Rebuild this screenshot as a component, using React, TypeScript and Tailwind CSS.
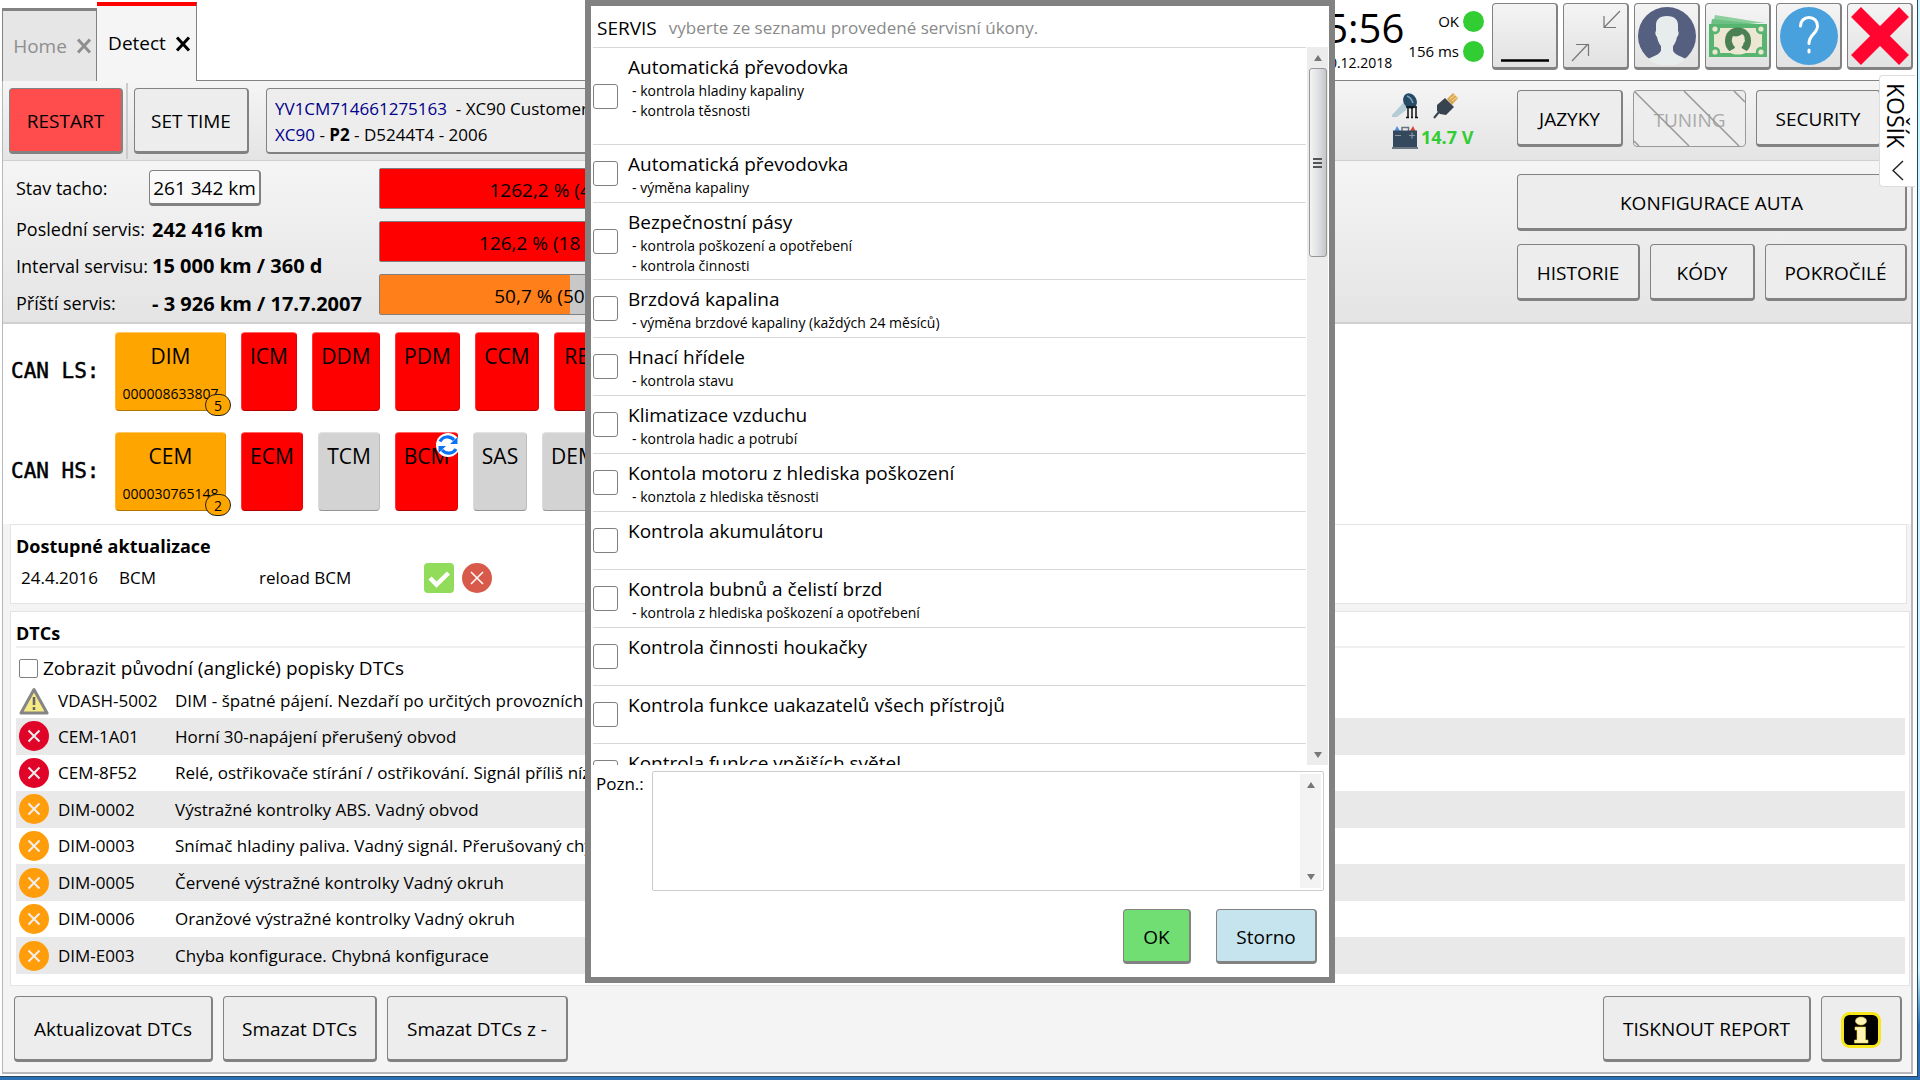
import React, { useState } from 'react'
import clsx from 'clsx'

type Module = { name: string; color: string; width: string; serial?: string; count?: number; reload?: boolean }

const canLs: Module[] = [
  { name: 'DIM', color: 'bg-[#ffa500]', width: 'w-[111px]', serial: '000008633807', count: 5 },
  { name: 'ICM', color: 'bg-[#ff0000]', width: 'w-[56px]' },
  { name: 'DDM', color: 'bg-[#ff0000]', width: 'w-[68px]' },
  { name: 'PDM', color: 'bg-[#ff0000]', width: 'w-[65px]' },
  { name: 'CCM', color: 'bg-[#ff0000]', width: 'w-[64px]' },
  { name: 'REM', color: 'bg-[#ff0000]', width: 'w-[64px]' },
]

const canHs: Module[] = [
  { name: 'CEM', color: 'bg-[#ffa500]', width: 'w-[111px]', serial: '000030765148', count: 2 },
  { name: 'ECM', color: 'bg-[#ff0000]', width: 'w-[62px]' },
  { name: 'TCM', color: 'bg-[#d3d3d3]', width: 'w-[62px]' },
  { name: 'BCM', color: 'bg-[#ff0000]', width: 'w-[63px]', reload: true },
  { name: 'SAS', color: 'bg-[#d3d3d3]', width: 'w-[54px]' },
  { name: 'DEM', color: 'bg-[#d3d3d3]', width: 'w-[64px]' },
]

const dtcs = [
  { level: 'warning', code: 'VDASH-5002', text: 'DIM - špatné pájení. Nezdaří po určitých provozních' },
  { level: 'error', code: 'CEM-1A01', text: 'Horní 30-napájení přerušený obvod' },
  { level: 'error', code: 'CEM-8F52', text: 'Relé, ostřikovače stírání / ostřikování. Signál příliš nízký' },
  { level: 'minor', code: 'DIM-0002', text: 'Výstražné kontrolky ABS. Vadný obvod' },
  { level: 'minor', code: 'DIM-0003', text: 'Snímač hladiny paliva. Vadný signál. Přerušovaný chybný' },
  { level: 'minor', code: 'DIM-0005', text: 'Červené výstražné kontrolky Vadný okruh' },
  { level: 'minor', code: 'DIM-0006', text: 'Oranžové výstražné kontrolky Vadný okruh' },
  { level: 'minor', code: 'DIM-E003', text: 'Chyba konfigurace. Chybná konfigurace' },
]

const services = [
  { title: 'Automatická převodovka', notes: ['- kontrola hladiny kapaliny', '- kontrola těsnosti', ''] },
  { title: 'Automatická převodovka', notes: ['- výměna kapaliny'] },
  { title: 'Bezpečnostní pásy', notes: ['- kontrola poškození a opotřebení', '- kontrola činnosti'] },
  { title: 'Brzdová kapalina', notes: ['- výměna brzdové kapaliny (každých 24 měsíců)'] },
  { title: 'Hnací hřídele', notes: ['- kontrola stavu'] },
  { title: 'Klimatizace vzduchu', notes: ['- kontrola hadic a potrubí'] },
  { title: 'Kontola motoru z hlediska poškození', notes: ['- konztola z hlediska těsnosti'] },
  { title: 'Kontrola akumulátoru', notes: [] },
  { title: 'Kontrola bubnů a čelistí brzd', notes: ['- kontrola z hlediska poškození a opotřebení'] },
  { title: 'Kontrola činnosti houkačky', notes: [] },
  { title: 'Kontrola funkce uakazatelů všech přístrojů', notes: [] },
  { title: 'Kontrola funkce vnějších světel', notes: [] },
]

const bars = [
  { label: '1262,2 % (4544 d)', value: 100, color: 'bg-[#ff0000]' },
  { label: '126,2 % (18 926 km)', value: 100, color: 'bg-[#ff0000]' },
  { label: '50,7 % (507 hod)', value: 50.7, color: 'bg-[#ff7f1a]' },
]

const btnBase =
  'flex items-center justify-center rounded-[4px] border border-r-2 border-b-3 border-[#828282] whitespace-nowrap'

const Btn: React.FC<React.ButtonHTMLAttributes<HTMLButtonElement>> = ({ className, ...props }) => (
  <button type="button" className={clsx(btnBase, 'pt-[3px]', className)} {...props} />
)

const WindowBtn: React.FC<{ label: string; children: React.ReactNode }> = ({ label, children }) => (
  <button
    type="button"
    aria-label={label}
    className={clsx(btnBase, 'h-[67px] w-[66px] bg-linear-to-b from-[#f4f4f4] to-[#e2e2e2]')}
  >
    {children}
  </button>
)

const CloseMark: React.FC = () => (
  <svg width="16" height="16" viewBox="0 0 16 16" fill="none" stroke="currentColor" strokeWidth="3">
    <path d="M2 1.5 14 14.5M14 1.5 2 14.5" />
  </svg>
)

const UserIcon: React.FC = () => (
  <svg width="58" height="58" viewBox="0 0 58 58">
    <circle cx="29" cy="29" r="29" fill="#556080" />
    <path
      d="M29 9c-8 0-11 4-11 9v6c-1 1-1 4 1 6 1 5 3 8 4 9v4c0 3-4 5-13 9a29 29 0 0 0 38 0c-9-4-13-6-13-9v-4c1-1 3-4 4-9 2-2 2-5 1-6v-6c0-5-3-9-11-9Z"
      fill="#e7eced"
    />
  </svg>
)

const MoneyIcon: React.FC = () => (
  <svg width="58" height="42" viewBox="0 0 58 42">
    <path d="M6 0 56 8H4Z" fill="#8ccf9c" />
    <path d="M3 4 58 10H2Z" fill="#6cc083" />
    <rect y="9" width="58" height="33" fill="#57b56f" />
    <path d="M11 13h36a5 5 0 0 0 6 6v13a5 5 0 0 0-6 6H11a5 5 0 0 0-6-6V19a5 5 0 0 0 6-6Z" fill="#ece7d2" />
    <circle cx="6" cy="14" r="2.6" fill="#ece7d2" />
    <circle cx="52" cy="14" r="2.6" fill="#ece7d2" />
    <circle cx="6" cy="37" r="2.6" fill="#ece7d2" />
    <circle cx="52" cy="37" r="2.6" fill="#ece7d2" />
    <path d="M29 12.5c-8 0-13 6-13 13 0 6 2.5 10 7 12h12c4.5-2 7-6 7-12 0-7-5-13-13-13Z" fill="#4a8054" />
    <path d="M24 21c3 1 7 0 9-2 2 1 3 3 2.500 5 1 2 0 3-1 4 0 2-1 3-2 4 1 3 4 2 6 5-3 2-6 2.500-9.500 2.500S22.500 39 20 37c2-3 5-2 6-5-1-1-2-2-2.500-4-1-1-1-4 .5-7Z" fill="#ece7d2" />
  </svg>
)

const HelpIcon: React.FC = () => (
  <svg width="58" height="58" viewBox="0 0 58 58" fill="none" stroke="#fff" strokeWidth="3" strokeLinecap="round">
    <circle cx="29" cy="29" r="29" fill="#48a0dc" stroke="none" />
    <path d="M20.500 19c0-5 3.500-8.500 8.500-8.500s8.500 3.500 8.500 8.500c0 8-8.500 8-8.500 17.500M29 43v2" />
  </svg>
)

const KeyIcon: React.FC = () => (
  <svg width="26" height="26" viewBox="0 0 26 26">
    <path d="M12 9 18 14 5 24H0v-2Z" fill="#b4ccd6" />
    <ellipse cx="18" cy="8" rx="6.500" ry="8" transform="rotate(-30 18 8)" fill="#254b66" />
    <path d="M15 3c3 1 5 4 6 7" fill="none" stroke="#7fa3b8" strokeWidth="1.500" />
    <path d="M14 14h11M16 14v10M20 14v10M24 14v10M14 24.500h3M19 24.500h2M23 24.500h3" stroke="#111" strokeWidth="1.500" />
  </svg>
)

const PlugIcon: React.FC = () => (
  <svg width="26" height="26" viewBox="0 0 26 26">
    <path d="m14 6 6-6 5 5-6 7Z" fill="#dba753" />
    <path d="m17 6 5-4M19 8l5-4" stroke="#fae0a0" />
    <path d="m12 5 9 9-8 8-6-1-3-3v-6Z" fill="#37444f" />
    <path d="m6 19-5 6" stroke="#37444f" strokeWidth="2" />
  </svg>
)

const BatteryIcon: React.FC = () => (
  <svg width="26" height="23" viewBox="0 0 26 23">
    <path d="M2.500 5 5 0l3 5Z" fill="#4a8fe8" />
    <path d="M18 5 21 0l2.500 5Z" fill="#d8452e" />
    <path d="M10 5V1.500h6.500V5" fill="none" stroke="#667480" strokeWidth="1.500" />
    <rect x="1" y="4.500" width="24" height="17" fill="#34495e" />
    <path d="M0 22h26" stroke="#6b7884" strokeWidth="2" />
    <path d="M3 9.500h6M17 9.500h6M20 6.500v6" stroke="#8996a3" strokeWidth="1.200" />
  </svg>
)

const ReloadIcon: React.FC = () => (
  <svg width="24" height="26" viewBox="0 0 24 26" className="absolute -top-px -right-[3px]">
    <circle cx="12" cy="13" r="12" fill="#fff" />
    <path d="M4 9.500C7 4 14 3.500 18 8M20 17c-3 5-10 5.500-14 1" fill="none" stroke="#0a72f5" strokeWidth="3.200" />
    <path d="M21.500 5v7H14ZM2.500 21v-7H10Z" fill="#0a72f5" />
  </svg>
)

const InfoIcon: React.FC = () => (
  <svg width="40" height="36" viewBox="0 0 40 36">
    <rect x="1.500" y="1.500" width="37" height="33" rx="7" fill="#000" stroke="#f7e71c" strokeWidth="3" />
    <g fill="#fdf4b4" stroke="#e8cf3c" strokeWidth=".6">
      <ellipse cx="20" cy="9" rx="5.500" ry="4" />
      <path d="M14 15h10.500v13H27v3H13.500v-3H16V18h-2Z" />
    </g>
  </svg>
)

const LevelIcon: React.FC<{ level: string }> = ({ level }) =>
  level === 'warning' ? (
    <svg width="30" height="28" viewBox="0 0 30 28" className="block">
      <path d="M15 2.500 28 26H2Z" fill="#f6ea85" stroke="#858585" strokeWidth="3" strokeLinejoin="round" />
      <path d="M15 10v8M15 20v3" stroke="#666" strokeWidth="2.600" />
    </svg>
  ) : (
    <svg width="30" height="30" viewBox="0 0 30 30" className="block">
      <circle cx="15" cy="15" r="15" fill={level === 'error' ? '#e00428' : '#ff9d0a'} />
      <path d="m9.500 9.500 11 11M20.500 9.500l-11 11" stroke="#f3eeee" strokeWidth="2" />
    </svg>
  )

const ModuleRow: React.FC<{ label: string; modules: Module[] }> = ({ label, modules }) => (
  <div className="flex h-[79px] items-center">
    <div className="w-[104px] shrink-0 font-['DejaVu_Sans_Mono',monospace] text-[21px] [-webkit-text-stroke:0.500px]">{label}</div>
    <div className="flex h-full gap-[15px]">
      {modules.map((m) => (
        <button
          key={m.name}
          type="button"
          className={clsx(
            'relative flex shrink-0 flex-col items-center justify-between rounded-[4px] border border-t-white/40 border-r-black/10 border-b-black/30 border-l-white/20 pt-[9px] pb-[6px]',
            m.color,
            m.width
          )}
        >
          <span className="text-[21px] leading-[28px]">{m.name}</span>
          {m.serial && <span className="text-[14px] leading-[20px]">{m.serial}</span>}
          {m.count && (
            <span className="absolute -right-[6px] -bottom-[6px] flex h-[22px] w-[26px] items-center justify-center rounded-full border border-[#222] bg-[#ffa500] text-[14px]">
              {m.count}
            </span>
          )}
          {m.reload && <ReloadIcon />}
        </button>
      ))}
    </div>
  </div>
)

const ServiceDialog: React.FC = () => (
  <div
    role="dialog"
    aria-labelledby="service-title"
    className="absolute top-0 left-1/2 w-[750px] -translate-x-1/2 border-6 border-[#828282] bg-white"
  >
    <div className="flex h-[41px] items-center gap-3 pt-[3px] pl-[6px]">
      <h2 id="service-title" className="text-[19px]">SERVIS</h2>
      <p className="text-[17px] text-[#8a8a8a]">vyberte ze seznamu provedené servisní úkony.</p>
    </div>
    <div className="flex h-[718px]">
      <ul className="ml-[2px] flex-1 overflow-hidden border-t border-[#d8d8d8]">
        {services.map((s, i) => (
          <li key={i} className="border-b border-[#d8d8d8]">
            <label className="flex min-h-[57px] items-center gap-[10px]">
              <input type="checkbox" className="size-[25px] shrink-0 appearance-none rounded-[3px] border border-[#808080] bg-white" />
              <span className="flex flex-col self-stretch pt-[5px] pb-[3px]">
                <span className="text-[19px] leading-[28px]">{s.title}</span>
                {s.notes.map((n, j) => (
                  <span key={j} className="h-[20px] pl-1 text-[14px] leading-[20px]">{n}</span>
                ))}
              </span>
            </label>
          </li>
        ))}
      </ul>
      <div className="mr-px ml-px flex w-[21px] flex-col items-center bg-[#ececec] py-[7px]">
        <svg width="10" height="6" viewBox="0 0 10 6" className="mt-px"><path d="M5 0 9 6H1Z" fill="#777" /></svg>
        <div className="mt-[7px] flex h-[189px] w-[18px] flex-col items-center justify-center gap-[2px] rounded-[3px] border border-[#979797] bg-linear-to-r from-[#f4f4f4] via-[#e0e1e4] to-[#c4c6ca]">
          <i className="h-[2px] w-[9px] bg-[#555]" />
          <i className="h-[2px] w-[9px] bg-[#555]" />
          <i className="h-[2px] w-[9px] bg-[#555]" />
        </div>
        <svg width="10" height="6" viewBox="0 0 10 6" className="mt-auto"><path d="M1 0h8L5 6Z" fill="#777" /></svg>
      </div>
    </div>
    <div className="mt-[6px] mr-[5px] ml-[5px] flex">
      <label htmlFor="note" className="w-[56px] text-[17px] leading-[26px]">Pozn.:</label>
      <div className="flex h-[120px] flex-1 rounded-[2px] border border-[#ccc] py-[2px] pr-[2px]">
        <textarea id="note" className="flex-1 resize-none outline-none" />
        <div className="flex w-[21px] flex-col items-center justify-between bg-[#f3f3f3] py-2">
          <svg width="10" height="6" viewBox="0 0 10 6"><path d="M5 0 9 6H1Z" fill="#777" /></svg>
          <svg width="10" height="6" viewBox="0 0 10 6"><path d="M1 0h8L5 6Z" fill="#777" /></svg>
        </div>
      </div>
    </div>
    <div className="mt-[18px] mr-[12px] mb-[13px] flex justify-end gap-[25px]">
      <Btn className="h-[55px] w-[68px] bg-[#70de72] text-[19px]">OK</Btn>
      <Btn className="h-[55px] w-[101px] bg-[#c6e4ee] text-[19px]">Storno</Btn>
    </div>
  </div>
)

const App: React.FC = () => {
  const [original, setOriginal] = useState(false)

  return (
    <div className="relative flex min-h-screen flex-col overflow-hidden bg-linear-to-b from-[#c9f4fb] from-90% to-[#2b70b2] to-95% pr-[2px] pb-[3px] font-['Open_Sans','Noto_Sans',sans-serif] text-black">
      <div className="flex flex-1 flex-col border-r border-b border-[#28465f] bg-white pr-[4px] pb-[2px] pl-[2px]">
        <header className="flex h-[81px] items-end">
          <div className="flex h-[73px] w-[95px] items-center justify-center gap-[9px] border-t-3 border-r border-l border-[#828282] bg-[#e6e6e6] pl-[6px] text-[19px] text-[#8f8f8f]">
            Home
            <button type="button" aria-label="Zavřít Home"><CloseMark /></button>
          </div>
          <div className="flex h-[79px] w-[100px] items-center justify-center gap-[9px] border-t-4 border-r border-t-[#ff0000] border-r-[#828282] bg-[#f5f5f5] pl-[6px] text-[19px]">
            Detect
            <button type="button" aria-label="Zavřít Detect"><CloseMark /></button>
          </div>
          <div className="flex h-full flex-1 justify-end border-b border-[#828282] pt-[3px]">
            <div className="mr-[4px] flex flex-col items-end">
              <div className="text-[40px] leading-[49px]">15:56</div>
              <div className="mr-3 text-[14px] leading-[22px]">30.12.2018</div>
            </div>
            <div className="mr-[8px] flex flex-col gap-2 pt-[7px] text-right text-[15px] leading-[22px]">
              <div className="flex items-center justify-end gap-1">OK<i className="size-[21px] rounded-full bg-[#32cd32]" /></div>
              <div className="flex items-center justify-end gap-1">156 ms<i className="size-[21px] rounded-full bg-[#32cd32]" /></div>
            </div>
            <div className="flex gap-[5px]">
              <WindowBtn label="Minimalizovat">
                <svg width="48" height="52" viewBox="0 0 48 52"><path d="M0 50.500h48" stroke="#000" strokeWidth="2.500" /></svg>
              </WindowBtn>
              <WindowBtn label="Zmenšit">
                <svg width="50" height="52" viewBox="0 0 50 52" fill="none" stroke="#777" strokeWidth="1.200">
                  <path d="M49 1 33 17.500M33 6v11.500h12M1 51l16-17M5 34.500h12.500V46" />
                </svg>
              </WindowBtn>
              <WindowBtn label="Uživatel"><UserIcon /></WindowBtn>
              <WindowBtn label="Kredit"><MoneyIcon /></WindowBtn>
              <WindowBtn label="Nápověda"><HelpIcon /></WindowBtn>
              <WindowBtn label="Zavřít">
                <svg width="58" height="58" viewBox="0 0 58 58" stroke="#ff0530" strokeWidth="14">
                  <path d="m5 5 48 48M53 5 5 53" />
                </svg>
              </WindowBtn>
            </div>
          </div>
        </header>

        <main className="flex flex-1 flex-col border-r-2 border-b-2 border-l border-[#b8b8bc] bg-white">
          {/* Toolbar */}
          <div className="flex h-[80px] border-b border-[#d0d0d0] bg-linear-to-b from-[#f5f5f5] to-[#e4e4e4] pt-[7px] pl-[6px] text-[19px]">
            <Btn className="h-[66px] w-[114px] bg-[#ff4d4d]">RESTART</Btn>
            <div className="mx-[3px] -mt-[5px] mb-[1px] w-[2px] bg-[#ccc]" />
            <Btn className="ml-[3px] h-[66px] w-[115px] bg-[#ededed]">SET TIME</Btn>
            <div className="ml-[17px] flex h-[66px] w-[700px] flex-col justify-center rounded-[4px] border border-b-2 border-[#828282] bg-[#ededed] pt-[2px] pl-[8px] text-[17px] leading-[26px]">
              <div><a href="#vin" className="text-[#00008b]">YV1CM714661275163</a>&nbsp; - XC90 Customer</div>
              <div><a href="#model" className="text-[#00008b]">XC90</a> - <b>P2</b> - D5244T4 - 2006</div>
            </div>
            <div className="ml-auto w-[120px] pt-[5px]">
              <div className="flex gap-[15px]"><KeyIcon /><PlugIcon /></div>
              <div className="mt-[5px] flex items-center gap-[3px] text-[18px] leading-[26px] font-bold text-[#32cd32]">
                <BatteryIcon />14.7 V
              </div>
            </div>
            <div className="mt-[2px] mr-[30px] ml-[5px] flex gap-[10px]">
              <Btn className="h-[57px] w-[106px] bg-[#ededed]">JAZYKY</Btn>
              <button type="button" disabled className="relative h-[57px] w-[113px] rounded-[4px] border border-[#999] bg-[#ededed] pt-[3px] text-[#aaa]">
                TUNING
                <svg width="111" height="55" viewBox="0 0 111 55" stroke="#999" strokeWidth="1.500" className="absolute top-0 left-0">
                  <path d="m0 0 55 55M50 0l55 55M100 0l11 11M0 50l5 5" />
                </svg>
              </button>
              <Btn className="h-[57px] w-[125px] bg-[#ededed]">SECURITY</Btn>
            </div>
          </div>

          {/* Service state */}
          <div className="flex h-[163px] border-b-2 border-[#d0d0d0] bg-linear-to-b from-[#f5f5f5] to-[#e4e4e4]">
            <div className="grid w-[376px] shrink-0 grid-cols-[136px_1fr] grid-rows-[48px_35px_38px_37px] content-start items-center pt-[3px] pl-[13px] text-[18px] whitespace-nowrap">
              <div>Stav tacho:</div>
              <Btn className="-ml-[3px] h-[36px] w-[112px] bg-[#fafafa] text-[19px]">261 342 km</Btn>
              <div>Poslední servis:</div>
              <b className="text-[20px] font-bold">242 416 km</b>
              <div>Interval servisu:</div>
              <b className="text-[20px] font-bold">15 000 km / 360 d</b>
              <div>Příští servis:</div>
              <b className="text-[20px] font-bold">- 3 926 km / 17.7.2007</b>
            </div>
            <div className="flex w-[377px] flex-col gap-3 pt-[7px]">
              {bars.map((b) => (
                <div key={b.label} className="relative flex h-[41px] items-center justify-center rounded-[2px] border border-[#808080] bg-[#c8c8c8] pt-[3px] text-[19px]">
                  <div className={clsx('absolute inset-y-0 left-0', b.color)} style={{ width: `${b.value}%` }} />
                  <span className="relative">{b.label}</span>
                </div>
              ))}
            </div>
            <div className="ml-auto flex w-[394px] flex-col gap-[13px] pt-[13px] pr-[4px] text-[19px]">
              <Btn className="h-[57px] bg-[#ededed]">KONFIGURACE AUTA</Btn>
              <div className="flex gap-[10px]">
                <Btn className="h-[57px] w-[123px] bg-[#ededed]">HISTORIE</Btn>
                <Btn className="h-[57px] w-[105px] bg-[#ededed]">KÓDY</Btn>
                <Btn className="h-[57px] flex-1 bg-[#ededed]">POKROČILÉ</Btn>
              </div>
            </div>
          </div>

          {/* CAN modules */}
          <div className="flex flex-col gap-[21px] pt-[8px] pb-[13px] pl-[8px]">
            <ModuleRow label="CAN LS:" modules={canLs} />
            <ModuleRow label="CAN HS:" modules={canHs} />
          </div>

          <div className="flex flex-1 flex-col bg-[#f4f4f4] pl-[7px]">
            {/* Updates */}
            <section className="mr-[4px] h-[80px] border border-[#e4e4e4] bg-white pt-[8px] pl-[5px]">
              <h3 className="text-[18px] leading-[27px] font-bold">Dostupné aktualizace</h3>
              <div className="flex h-[36px] items-center pl-[5px] text-[17px]">
                <span className="w-[98px]">24.4.2016</span>
                <span className="w-[140px]">BCM</span>
                <span className="w-[165px]">reload BCM</span>
                <button type="button" aria-label="Potvrdit">
                  <svg width="30" height="30" viewBox="0 0 30 30">
                    <rect width="30" height="30" rx="4" fill="#91dc5a" />
                    <path d="m6 15 6.500 6.500L24.500 10" fill="none" stroke="#fff" strokeWidth="4.500" />
                  </svg>
                </button>
                <button type="button" aria-label="Odmítnout" className="ml-2">
                  <svg width="30" height="30" viewBox="0 0 30 30">
                    <circle cx="15" cy="15" r="15" fill="#d75a4a" />
                    <path d="m9 9 12 12M21 9 9 21" stroke="#fff" strokeWidth="1.500" />
                  </svg>
                </button>
              </div>
            </section>

            {/* Trouble codes */}
            <section className="mt-[7px] mr-[1px] flex-1 border border-[#e4e4e4] bg-white pr-[4px] pl-[5px]">
              <h3 className="h-[36px] border-b-2 border-[#efefef] pt-[8px] text-[18px] leading-[26px] font-bold">DTCs</h3>
              <label className="flex h-[36px] items-center gap-[5px] pt-[4px] pl-[3px] text-[19px]">
                <input
                  type="checkbox"
                  checked={original}
                  onChange={(e) => setOriginal(e.target.checked)}
                  className="size-[19px] appearance-none rounded-[2px] border border-[#808080] bg-white"
                />
                Zobrazit původní (anglické) popisky DTCs
              </label>
              <table className="h-[290px] w-full text-[17px] whitespace-nowrap">
                <tbody>
                  {dtcs.map((d) => (
                    <tr key={d.code} className="even:bg-[#e9e9e9]">
                      <td className="w-[42px] pl-[3px]"><LevelIcon level={d.level} /></td>
                      <td className="w-[117px]">{d.code}</td>
                      <td>{d.text}</td>
                    </tr>
                  ))}
                </tbody>
              </table>
            </section>
          </div>

          <footer className="flex h-[86px] gap-[10px] bg-[#f4f4f4] pt-[10px] pr-[9px] pl-[11px] text-[19px]">
            <Btn className="h-[66px] w-[199px] bg-[#ededed]">Aktualizovat DTCs</Btn>
            <Btn className="h-[66px] w-[154px] bg-[#ededed]">Smazat DTCs</Btn>
            <Btn className="h-[66px] w-[181px] bg-[#ededed]">Smazat DTCs z -</Btn>
            <Btn className="ml-auto h-[66px] w-[208px] bg-[#ededed]">TISKNOUT REPORT</Btn>
            <Btn aria-label="Informace" className="h-[66px] w-[81px] bg-[#ededed]"><InfoIcon /></Btn>
          </footer>
        </main>
      </div>

      {/* Cart drawer handle */}
      <button
        type="button"
        className="absolute top-[75px] right-[5px] flex h-[112px] w-[36px] flex-col items-center justify-between rounded-l-[4px] border border-r-0 border-[#ddd] bg-white pt-[7px] pb-[5px] text-[23px]"
      >
        <span className="mr-1 leading-[26px] [writing-mode:vertical-rl]">KOŠÍK</span>
        <svg width="12" height="21" viewBox="0 0 12 21" fill="none" stroke="#222" strokeWidth="1.500"><path d="M11 1 1 10.500 11 20" /></svg>
      </button>

      <ServiceDialog />
    </div>
  )
}

export default App
